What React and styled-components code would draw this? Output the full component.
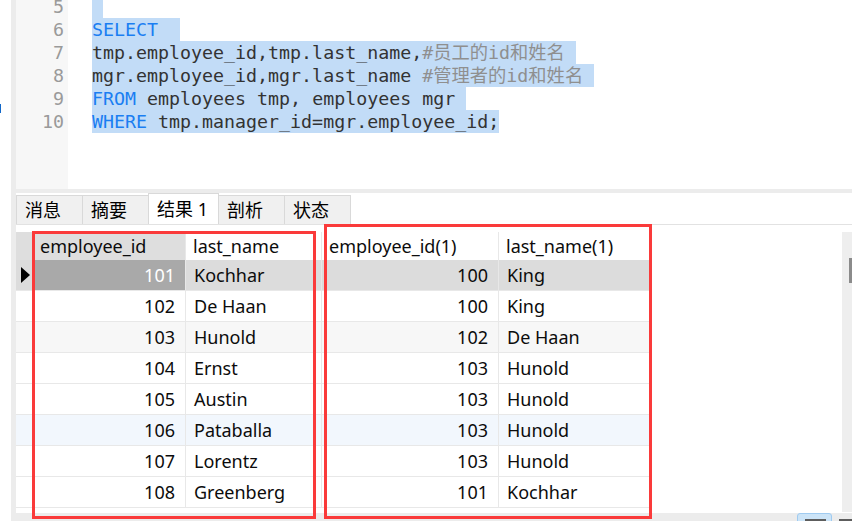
import React from 'react';
import styled, { createGlobalStyle } from 'styled-components';

const Global = createGlobalStyle`
  html, body { margin: 0; padding: 0; background: #fff; }
  body { width: 852px; height: 521px; overflow: hidden; }
  #root { width: 852px; height: 521px; }
`;

const MONO = `"DejaVu Sans Mono", "Noto Sans CJK SC", monospace`;
const SANS = `"Noto Sans", "Noto Sans CJK SC", sans-serif`;

const Page = styled.div`
  position: relative;
  display: flex;
  width: 852px;
  height: 521px;
  overflow: hidden;
  background: #fff;
`;

const LeftEdge = styled.div`
  width: 11px;
  flex: none;
  padding-top: 104px;
  box-sizing: border-box;
  background: #fff;
`;

const CaretMark = styled.div`
  width: 1px;
  height: 9px;
  background: #1268c9;
`;

const Workspace = styled.div`
  flex: 1;
  min-width: 0;
  display: flex;
  flex-direction: column;
  background: #ececec;
  padding-left: 5px;
`;

const Editor = styled.div`
  height: 189px;
  flex: none;
  display: flex;
  background: #fff;
  overflow: hidden;
  margin-bottom: 4px;
  font: 18.3px/23px ${MONO};
`;

const Gutter = styled.div`
  width: 52px;
  flex: none;
  box-sizing: border-box;
  padding-right: 4px;
  background: #f7f7f7;
  color: #9a9a9a;
  text-align: right;
`;

const LineStack = styled.div`
  margin-top: -5px;
`;

const Code = styled.div`
  flex: 1;
  padding-left: 24px;
  color: #333;
  white-space: pre;
`;

const Line = styled.div`
  height: 23px;
`;

const Sel = styled.span`
  display: inline-block;
  height: 23px;
  vertical-align: top;
  background: #c2dcf7;
`;

const Kw = styled.span`
  color: #1a7ef2;
`;

const Comment = styled.span`
  color: #8f8f8f;
`;

const Results = styled.div`
  flex: 1;
  display: flex;
  flex-direction: column;
  background: #fff;
  min-height: 0;
`;

const TabBar = styled.div`
  height: 31px;
  flex: none;
  display: flex;
  align-items: flex-end;
`;

const Tab = styled.div`
  box-sizing: border-box;
  height: ${p => (p.$active ? 31 : 29)}px;
  min-width: 67px;
  padding: 0 10px 0 8px;
  margin-right: -1px;
  display: flex;
  align-items: center;
  border: 1px solid #d9d9d9;
  border-bottom: none;
  background: ${p => (p.$active ? '#fff' : '#f0f0f0')};
  color: #000;
  font: 18px/1 ${SANS};
  position: relative;
  z-index: ${p => (p.$active ? 1 : 0)};
`;

const GridArea = styled.div`
  flex: 1;
  display: flex;
  align-items: flex-start;
  box-sizing: border-box;
  border-top: 1px solid #e2e2e2;
  padding-top: 7px;
  min-height: 0;
`;

const Table = styled.div`
  flex: 1;
  min-width: 0;
  overflow: hidden;
  font: 18px/1 ${SANS};
  color: #0c0c0c;
`;

const HeaderRow = styled.div`
  display: flex;
  height: 28px;
  width: max-content;
`;

const DataRow = styled.div`
  display: flex;
  height: 31px;
  width: max-content;
  box-sizing: border-box;
  border-bottom: 1px solid #e8e8e8;
  background: ${p => p.$bg || 'transparent'};
`;

const Cell = styled.div`
  box-sizing: border-box;
  width: ${p => p.$w}px;
  flex: none;
  display: flex;
  align-items: center;
  justify-content: ${p => (p.$num ? 'flex-end' : 'flex-start')};
  padding: ${p => (p.$num ? '0 10px 0 0' : '0 0 0 8px')};
  border-right: 1px solid #e8e8e8;
  background: ${p => p.$bg || 'transparent'};
  color: ${p => p.$fg || 'inherit'};
  white-space: nowrap;
`;

const HeadCell = styled(Cell)`
  padding: 0 0 0 7px;
  justify-content: flex-start;
`;

const IndicatorCell = styled.div`
  box-sizing: border-box;
  width: 17px;
  flex: none;
  display: flex;
  align-items: center;
  padding-left: 5px;
  border-right: 1px solid #e8e8e8;
  background: ${p => p.$bg || 'transparent'};
`;

const Arrow = styled.div`
  width: 0;
  height: 0;
  border-left: 9px solid #000;
  border-top: 8.5px solid transparent;
  border-bottom: 8.5px solid transparent;
`;

const VScroll = styled.div`
  width: 10px;
  height: 280px;
  flex: none;
  box-sizing: border-box;
  padding: 26px 0 0 7px;
  background: #eeeeee;
`;

const Thumb = styled.div`
  width: 8px;
  height: 25px;
  background: #8b8b8b;
`;

const BottomBar = styled.div`
  height: 8px;
  flex: none;
  display: flex;
  justify-content: flex-end;
  align-items: flex-start;
  gap: 7px;
  overflow: hidden;
`;

const ScrollBtn = styled.div`
  width: 35px;
  height: 12px;
  box-sizing: border-box;
  padding: 5px 0 0 7px;
  background: #cce4f7;
  border: 1px solid #a0cbf0;
  border-radius: 3px 3px 0 0;
`;

const ScrollGrip = styled.div`
  width: ${p => p.$w}px;
  height: 3px;
  margin-top: ${p => p.$top || 0}px;
  background: #5d5d5d;
`;

const Annotation = styled.div`
  position: absolute;
  left: ${p => p.$x}px;
  top: ${p => p.$y}px;
  width: ${p => p.$w}px;
  height: ${p => p.$h}px;
  box-sizing: border-box;
  border: 3px solid #fa3a3a;
  pointer-events: none;
`;

const COLS = [153, 136, 177, 153];

const rows = [
  [101, 'Kochhar', 100, 'King'],
  [102, 'De Haan', 100, 'King'],
  [103, 'Hunold', 102, 'De Haan'],
  [104, 'Ernst', 103, 'Hunold'],
  [105, 'Austin', 103, 'Hunold'],
  [106, 'Pataballa', 103, 'Hunold'],
  [107, 'Lorentz', 103, 'Hunold'],
  [108, 'Greenberg', 101, 'Kochhar'],
];

const rowBg = i => (i === 0 ? '#dcdcdc' : i === 2 ? '#f7f7f7' : i === 5 ? '#f2f7fd' : undefined);

const tabs = ['消息', '摘要', '结果 1', '剖析', '状态'];

export default function App() {
  const NB = '\u00a0';
  return (
    <Page>
      <Global />
      <LeftEdge>
        <CaretMark />
      </LeftEdge>
      <Workspace>
        <Editor>
          <Gutter>
            <LineStack>
              {[5, 6, 7, 8, 9, 10].map(n => (
                <Line key={n}>{n}</Line>
              ))}
            </LineStack>
          </Gutter>
          <Code>
            <LineStack>
              <Line><Sel>{NB}</Sel></Line>
              <Line><Sel><Kw>SELECT</Kw>{NB}{NB}</Sel></Line>
              <Line><Sel>tmp.employee_id,tmp.last_name,<Comment>#员工的id和姓名</Comment>{NB}</Sel></Line>
              <Line><Sel>mgr.employee_id,mgr.last_name <Comment>#管理者的id和姓名</Comment>{NB}</Sel></Line>
              <Line><Sel><Kw>FROM</Kw> employees tmp, employees mgr{NB}</Sel></Line>
              <Line><Sel><Kw>WHERE</Kw> tmp.manager_id=mgr.employee_id;</Sel></Line>
            </LineStack>
          </Code>
        </Editor>
        <Results>
          <TabBar>
            {tabs.map((t, i) => (
              <Tab key={t} $active={i === 2}>{t}</Tab>
            ))}
          </TabBar>
          <GridArea>
            <Table>
              <HeaderRow>
                <IndicatorCell $bg="#dedede" />
                <HeadCell $w={COLS[0]} $bg="#dedede">employee_id</HeadCell>
                <HeadCell $w={COLS[1]}>last_name</HeadCell>
                <HeadCell $w={COLS[2]}>employee_id(1)</HeadCell>
                <HeadCell $w={COLS[3]}>last_name(1)</HeadCell>
              </HeaderRow>
              {rows.map((r, i) => (
                <DataRow key={i} $bg={rowBg(i)}>
                  <IndicatorCell>{i === 0 && <Arrow />}</IndicatorCell>
                  <Cell $w={COLS[0]} $num $bg={i === 0 ? '#a9a9a9' : undefined} $fg={i === 0 ? '#fff' : undefined}>{r[0]}</Cell>
                  <Cell $w={COLS[1]}>{r[1]}</Cell>
                  <Cell $w={COLS[2]} $num>{r[2]}</Cell>
                  <Cell $w={COLS[3]}>{r[3]}</Cell>
                </DataRow>
              ))}
            </Table>
            <VScroll>
              <Thumb />
            </VScroll>
          </GridArea>
        </Results>
        <BottomBar>
          <ScrollBtn>
            <ScrollGrip $w={21} />
          </ScrollBtn>
          <ScrollGrip $w={13} $top={6} />
        </BottomBar>
      </Workspace>
      <Annotation $x={32} $y={231} $w={284} $h={288} />
      <Annotation $x={324} $y={224} $w={328} $h={295} />
    </Page>
  );
}
